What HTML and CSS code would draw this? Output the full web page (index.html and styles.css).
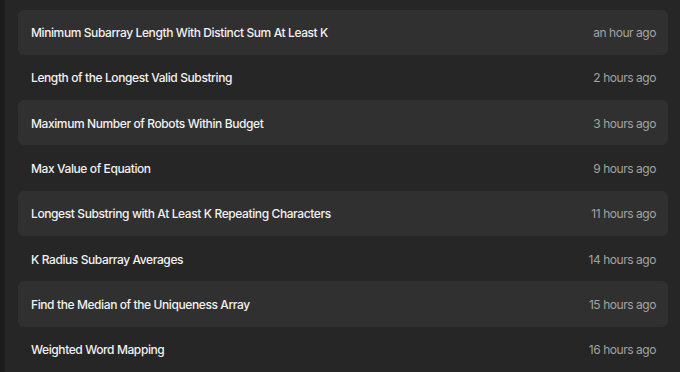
FILE: index.html
```html
<!DOCTYPE html>
<html>
<head>
<meta charset="utf-8">
<link rel="stylesheet" href="styles.css">
</head>
<body>
<div class="app">
  <div class="edge"></div>
  <ul class="list">
    <li class="row alt"><span class="title">Minimum Subarray Length With Distinct Sum At Least K</span><span class="time">an hour ago</span></li>
    <li class="row"><span class="title">Length of the Longest Valid Substring</span><span class="time">2 hours ago</span></li>
    <li class="row alt"><span class="title">Maximum Number of Robots Within Budget</span><span class="time">3 hours ago</span></li>
    <li class="row"><span class="title">Max Value of Equation</span><span class="time">9 hours ago</span></li>
    <li class="row alt"><span class="title">Longest Substring with At Least K Repeating Characters</span><span class="time">11 hours ago</span></li>
    <li class="row"><span class="title">K Radius Subarray Averages</span><span class="time">14 hours ago</span></li>
    <li class="row alt"><span class="title">Find the Median of the Uniqueness Array</span><span class="time">15 hours ago</span></li>
    <li class="row"><span class="title">Weighted Word Mapping</span><span class="time">16 hours ago</span></li>
  </ul>
</div>
</body>
</html>
```
FILE: styles.css
```css
html, body {
  margin: 0;
  padding: 0;
  background: #262626;
  height: 100%;
  overflow: hidden;
}
.app {
  display: flex;
  height: 100%;
  font-family: Inter, "Noto Sans", sans-serif;
}
.edge {
  width: 5px;
  flex: none;
  background: #1c1c1c;
}
.list {
  list-style: none;
  margin: 0;
  padding: 9.5px 12px 0 13px;
  flex: 1;
  display: flex;
  flex-direction: column;
}
.row {
  height: 45.3px;
  flex: none;
  display: flex;
  align-items: center;
  justify-content: space-between;
  padding: 1px 12px 0 13px;
  box-sizing: border-box;
  border-radius: 6px;
}
.row.alt {
  background: #303030;
}
.title {
  color: #f2f2f2;
  font-size: 12px;
  font-weight: 500;
  letter-spacing: -0.4px;
}
.time {
  color: #a3a3a3;
  font-size: 12px;
  font-weight: 400;
  letter-spacing: -0.45px;
}
```
